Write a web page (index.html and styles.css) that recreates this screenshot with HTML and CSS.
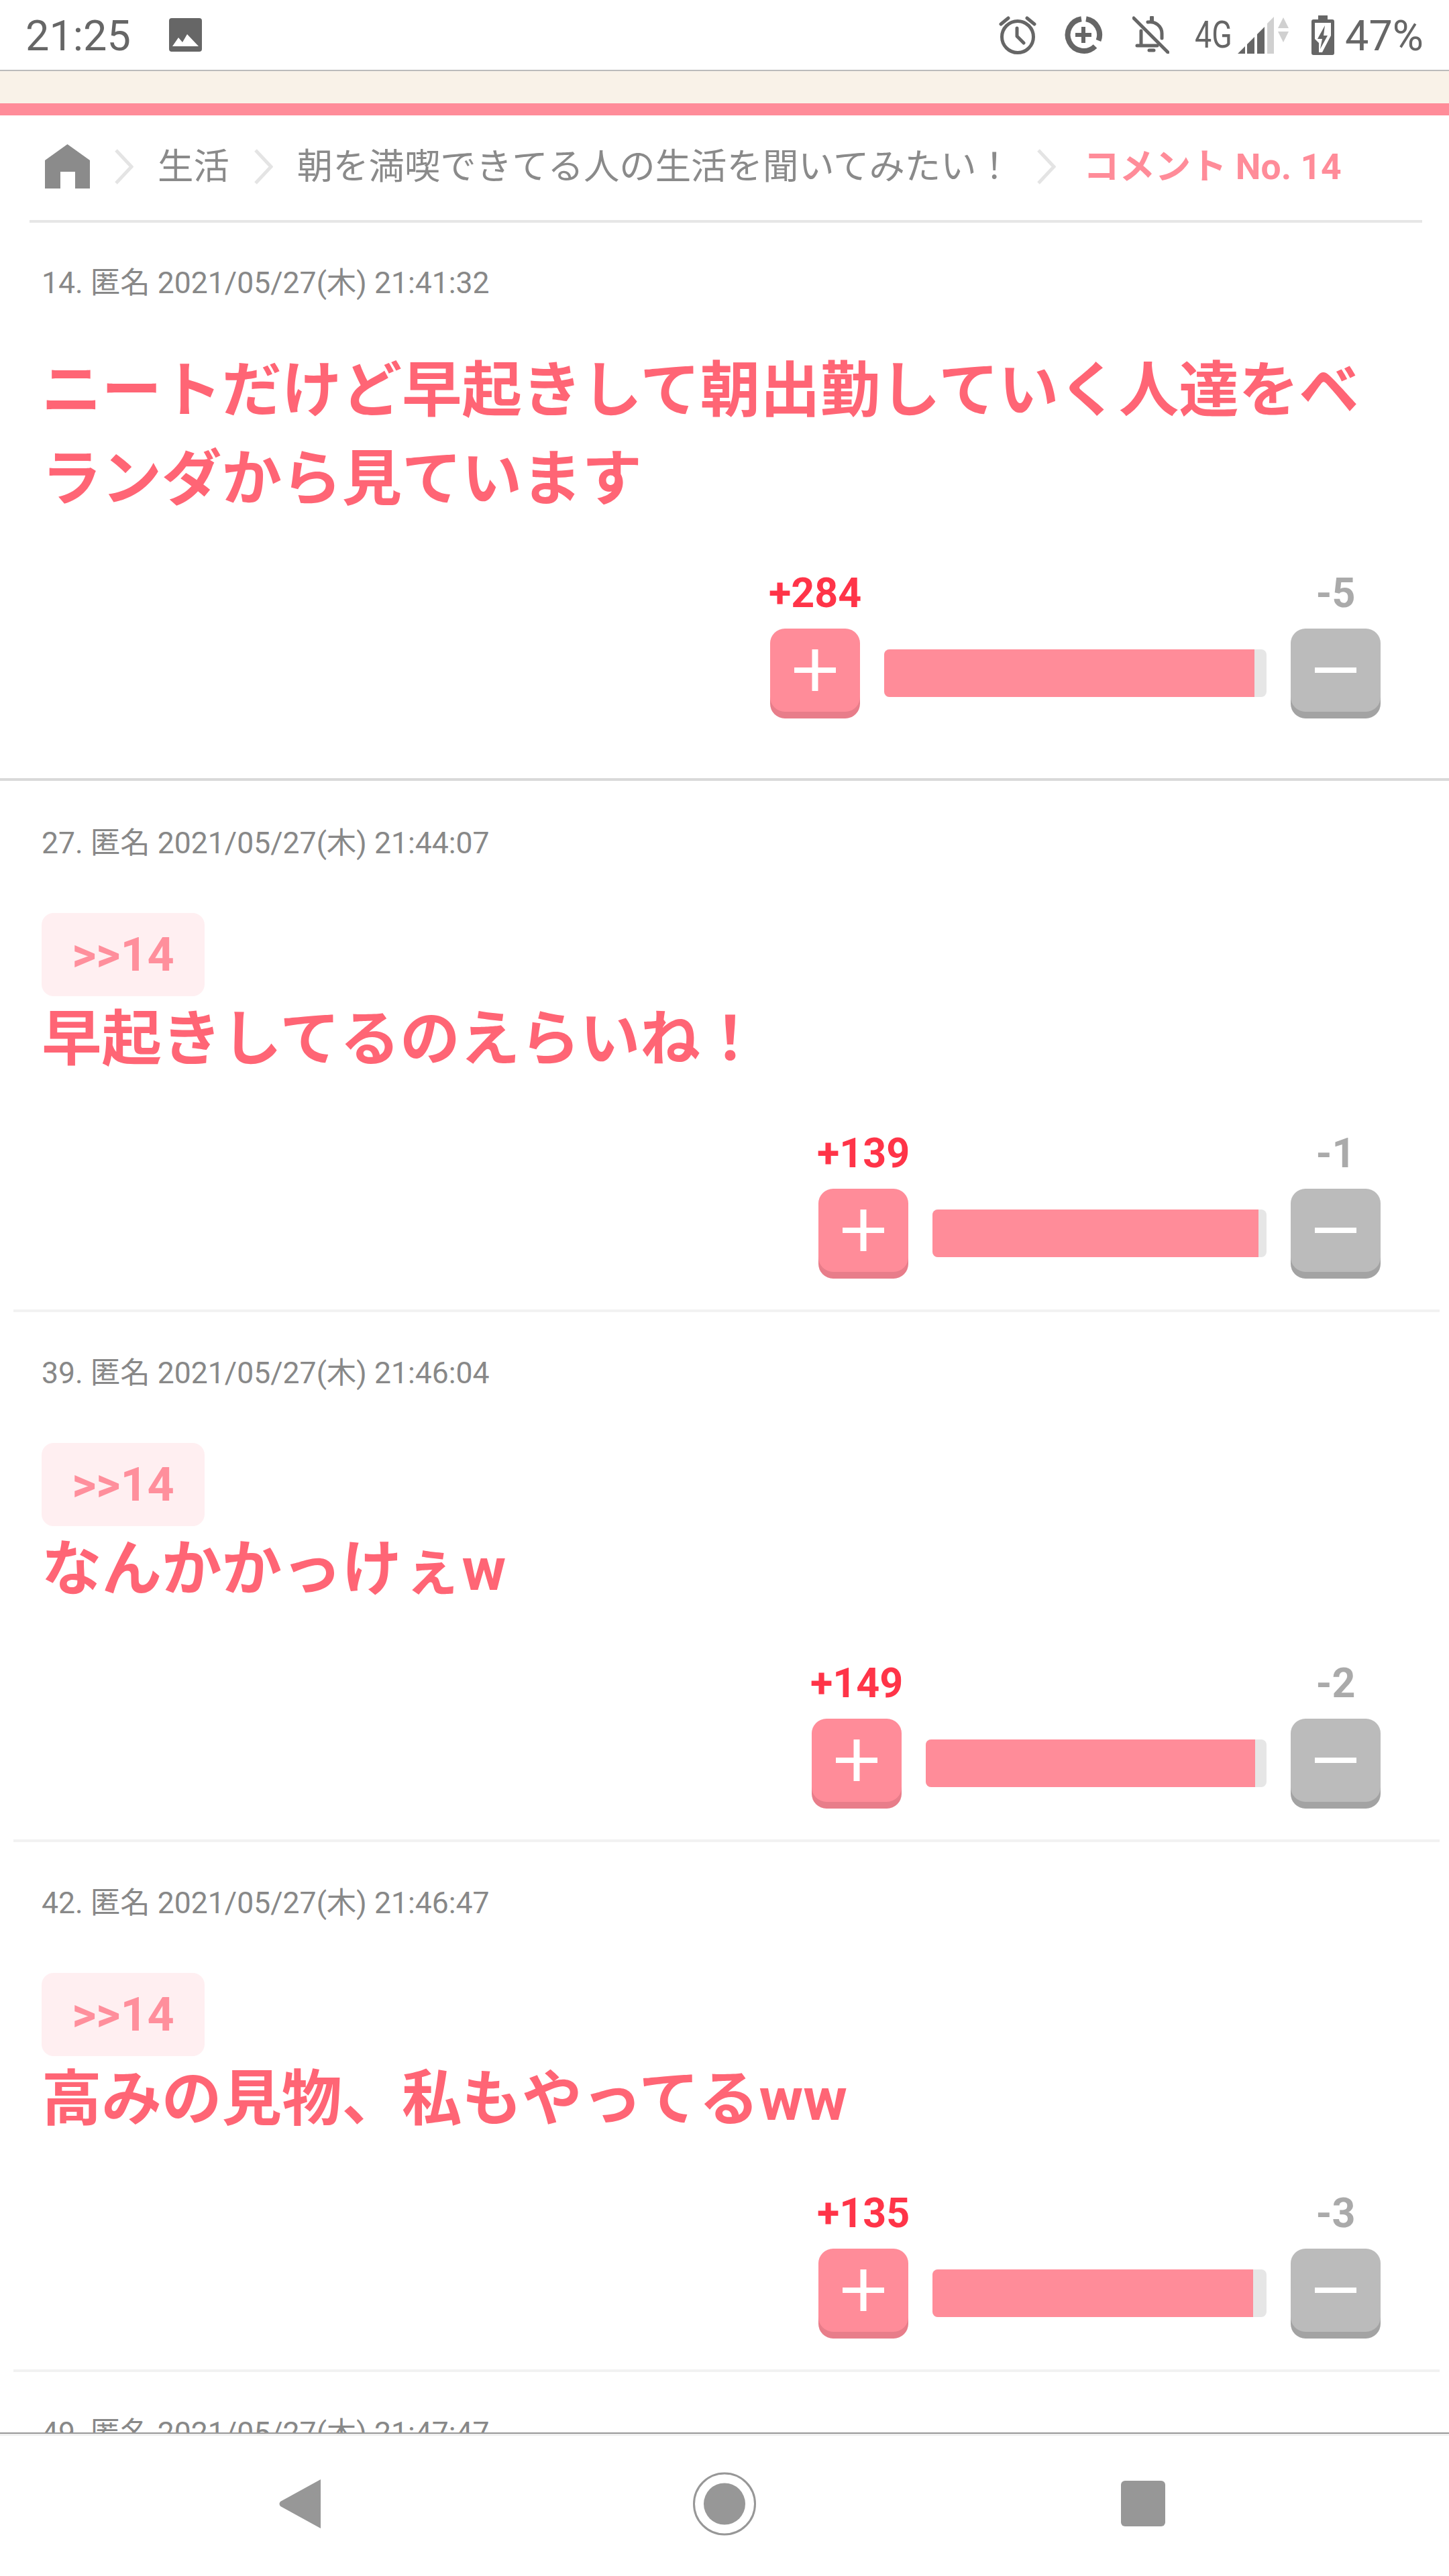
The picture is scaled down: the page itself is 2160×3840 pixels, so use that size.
FILE: index.html
```html
<!DOCTYPE html>
<html lang="ja">
  <head>
    <meta charset="UTF-8" />
    <meta name="viewport" content="width=device-width, initial-scale=1.0" />
    <title>コメント No. 14</title>
    <link rel="stylesheet" href="styles.css">
  </head>
  <body>
    <div class="screen">
      <div class="status-bar">
        <div class="status-left">
          <span class="status-text">21:25</span>
          <svg class="icon-image" width="49" height="50" viewBox="0 0 49 50">
            <rect width="49" height="50" rx="4" fill="#666"/>
            <path d="M5 42 L14 29 L20 36 L27 24 L44 42 Z" fill="#fff"/>
          </svg>
        </div>
        <div class="status-right">
          <svg class="icon-alarm" width="56" height="57" viewBox="0 0 56 57" fill="none" stroke="#666" stroke-width="5" stroke-linecap="round" stroke-linejoin="round">
            <circle cx="28" cy="31" r="23.5"/>
            <path d="M3 12 L14 3 M42 3 L53 12 M27 18 V30 L37 40"/>
          </svg>
          <svg class="icon-saver" width="57" height="57" viewBox="0 0 57 57" fill="none" stroke="#666">
            <path d="M25 4.2 A24 24 0 1 0 45.5 45" stroke-width="8"/>
            <path d="M32 4.3 A24 24 0 0 1 50.5 36.5" stroke-width="8"/>
            <path d="M16 28 H40 M28 16 V40" stroke-width="6"/>
          </svg>
          <svg class="icon-bell" width="55" height="56" viewBox="0 0 55 56" fill="none" stroke="#666" stroke-width="5" stroke-linecap="round" stroke-linejoin="round">
            <path d="M2 3 L53 54"/>
            <path d="M23 9 C34 7 44 15 44 26 V33"/>
            <path d="M13 22 V44 M7 44 H37"/>
            <path d="M29 2 V7" stroke-width="6"/>
            <path d="M25 51 H32" stroke-width="5"/>
          </svg>
          <span class="status-net">4G</span>
          <svg class="icon-signal" width="76" height="55" viewBox="0 0 76 55">
            <path d="M0 55 H11 V44 Z M14 55 H25 V30 L14 41 Z M29 55 H40 V15 L29 26 Z" fill="#666"/>
            <path d="M44 55 H54 V0 L44 10 Z M68 1 L76 17 H60 Z M60 22 H76 L68 38 Z" fill="#d0d0d0"/>
          </svg>
          <svg class="icon-battery" width="34" height="59" viewBox="0 0 34 59">
            <path d="M10 0 H24 V6 H31 Q34 6 34 9 V56 Q34 59 31 59 H3 Q0 59 0 56 V9 Q0 6 3 6 H10 Z" fill="#666"/>
            <path d="M5 11 H29 V30 L16 55 H11 V41 L5 35 Z" fill="#fff"/>
            <path d="M20 15 L9 35 H16 L13 50 L24 30 H18 Z" fill="#666"/>
          </svg>
          <span class="status-text status-battery">47%</span>
        </div>
      </div>

      <div class="notice-bar"></div>

      <div class="page">
        <nav class="crumbs">
          <svg class="crumb-home" width="67" height="66" viewBox="0 0 67 66">
            <path d="M33.5 0 L67 24 V66 H45 V41 H23 V66 H0 V24 Z" fill="#8b8b8b"/>
          </svg>
          <svg class="crumb-arrow" width="29" height="53" viewBox="0 0 29 53"><path d="M3 2 L26 26.500 L3 51" fill="none" stroke="#e4e4e4" stroke-width="5"/></svg>
          <a class="crumb-link">生活</a>
          <svg class="crumb-arrow" width="29" height="53" viewBox="0 0 29 53"><path d="M3 2 L26 26.500 L3 51" fill="none" stroke="#e4e4e4" stroke-width="5"/></svg>
          <a class="crumb-link">朝を満喫できてる人の生活を聞いてみたい！</a>
          <svg class="crumb-arrow" width="29" height="53" viewBox="0 0 29 53"><path d="M3 2 L26 26.500 L3 51" fill="none" stroke="#e4e4e4" stroke-width="5"/></svg>
          <strong class="crumb-current">コメント No. 14</strong>
        </nav>

        <article class="comment comment-main">
          <div class="comment-meta">14. 匿名 2021/05/27(木) 21:41:32</div>
          <p class="comment-text">ニートだけど早起きして朝出勤していく人達をベランダから見ています</p>
          <div class="vote">
            <div class="vote-col">
              <span class="count count-plus">+284</span>
              <button class="vote-btn vote-plus" type="button">
                <svg width="62" height="62" viewBox="0 0 62 62"><path d="M26.500 0 H35.500 V27 H62 V35 H35.500 V62 H26.500 V35 H0 V27 H26.500 Z" fill="#fff"/></svg>
              </button>
            </div>
            <div class="bar" style="width: 570px"><div class="bar-fill" style="width: 96.8%"></div></div>
            <div class="vote-col">
              <span class="count count-minus">-5</span>
              <button class="vote-btn vote-minus" type="button">
                <svg width="62" height="62" viewBox="0 0 62 62"><path d="M0 27 H62 V35 H0 Z" fill="#fff"/></svg>
              </button>
            </div>
          </div>
        </article>

        <article class="comment">
          <div class="comment-meta">27. 匿名 2021/05/27(木) 21:44:07</div>
          <a class="reply-chip">&gt;&gt;14</a>
          <p class="comment-text">早起きしてるのえらいね！</p>
          <div class="vote">
            <div class="vote-col">
              <span class="count count-plus">+139</span>
              <button class="vote-btn vote-plus" type="button">
                <svg width="62" height="62" viewBox="0 0 62 62"><path d="M26.500 0 H35.500 V27 H62 V35 H35.500 V62 H26.500 V35 H0 V27 H26.500 Z" fill="#fff"/></svg>
              </button>
            </div>
            <div class="bar" style="width: 498px"><div class="bar-fill" style="width: 97.6%"></div></div>
            <div class="vote-col">
              <span class="count count-minus">-1</span>
              <button class="vote-btn vote-minus" type="button">
                <svg width="62" height="62" viewBox="0 0 62 62"><path d="M0 27 H62 V35 H0 Z" fill="#fff"/></svg>
              </button>
            </div>
          </div>
        </article>

        <article class="comment">
          <div class="comment-meta">39. 匿名 2021/05/27(木) 21:46:04</div>
          <a class="reply-chip">&gt;&gt;14</a>
          <p class="comment-text">なんかかっけぇw</p>
          <div class="vote">
            <div class="vote-col">
              <span class="count count-plus">+149</span>
              <button class="vote-btn vote-plus" type="button">
                <svg width="62" height="62" viewBox="0 0 62 62"><path d="M26.500 0 H35.500 V27 H62 V35 H35.500 V62 H26.500 V35 H0 V27 H26.500 Z" fill="#fff"/></svg>
              </button>
            </div>
            <div class="bar" style="width: 508px"><div class="bar-fill" style="width: 96.7%"></div></div>
            <div class="vote-col">
              <span class="count count-minus">-2</span>
              <button class="vote-btn vote-minus" type="button">
                <svg width="62" height="62" viewBox="0 0 62 62"><path d="M0 27 H62 V35 H0 Z" fill="#fff"/></svg>
              </button>
            </div>
          </div>
        </article>

        <article class="comment">
          <div class="comment-meta">42. 匿名 2021/05/27(木) 21:46:47</div>
          <a class="reply-chip">&gt;&gt;14</a>
          <p class="comment-text">高みの見物、私もやってるww</p>
          <div class="vote">
            <div class="vote-col">
              <span class="count count-plus">+135</span>
              <button class="vote-btn vote-plus" type="button">
                <svg width="62" height="62" viewBox="0 0 62 62"><path d="M26.500 0 H35.500 V27 H62 V35 H35.500 V62 H26.500 V35 H0 V27 H26.500 Z" fill="#fff"/></svg>
              </button>
            </div>
            <div class="bar" style="width: 498px"><div class="bar-fill" style="width: 96%"></div></div>
            <div class="vote-col">
              <span class="count count-minus">-3</span>
              <button class="vote-btn vote-minus" type="button">
                <svg width="62" height="62" viewBox="0 0 62 62"><path d="M0 27 H62 V35 H0 Z" fill="#fff"/></svg>
              </button>
            </div>
          </div>
        </article>

        <article class="comment">
          <div class="comment-meta">49. 匿名 2021/05/27(木) 21:47:47</div>
        </article>
      </div>

      <div class="nav-bar">
        <svg class="nav-back" width="62" height="73" viewBox="0 0 62 73"><path d="M62 0 V73 L2 40 Q-1 36.500 2 33 Z" fill="#979797"/></svg>
        <svg class="nav-home" width="94" height="97" viewBox="0 0 94 97">
          <circle cx="47" cy="48.500" r="45.500" fill="none" stroke="#979797" stroke-width="3"/>
          <circle cx="47" cy="48.500" r="31" fill="#979797"/>
        </svg>
        <div class="nav-recent"></div>
      </div>
    </div>
  </body>
</html>
```

FILE: styles.css
```css
* {
  box-sizing: border-box;
}
html,
body {
  margin: 0;
  padding: 0;
  background-color: #fff;
}
body {
  font-family: Roboto, "Noto Sans CJK JP", sans-serif;
}
.screen {
  display: flex;
  flex-direction: column;
  width: 2160px;
  height: 3840px;
  overflow: hidden;
}

/* status bar */
.status-bar {
  display: flex;
  justify-content: space-between;
  align-items: center;
  height: 106px;
  padding: 0 38px;
  border-bottom: 2px solid #bbb;
  flex-shrink: 0;
}
.status-left,
.status-right {
  display: flex;
  align-items: center;
}
.status-text {
  margin-top: 4px;
  font-size: 63px;
  line-height: 100px;
  color: #666;
}
.icon-image {
  margin-left: 57px;
}
.icon-saver {
  margin-left: 42px;
}
.icon-bell {
  margin-left: 44px;
}
.status-net {
  width: 55px;
  margin-left: 38px;
  font-size: 56px;
  color: #666;
  white-space: nowrap;
  transform: scaleX(0.8);
  transform-origin: left center;
}
.icon-signal {
  margin-left: 9px;
}
.icon-battery {
  margin-left: 34px;
}
.status-battery {
  margin-left: 16px;
}

.notice-bar {
  height: 66px;
  background: #f9f2e8;
  border-bottom: 18px solid #ff8c99;
  flex-shrink: 0;
}

/* breadcrumb */
.page {
  flex: 1;
  min-height: 0;
  overflow: hidden;
}
.crumbs {
  display: flex;
  align-items: center;
  height: 160px;
  margin: 0 40px 0 44px;
  padding: 0 0 4px 23px;
  border-bottom: 4px solid #e6e6e6;
  white-space: nowrap;
}
.crumb-arrow {
  margin: 0 36px;
}
.crumb-link,
.crumb-current {
  margin-bottom: 10px;
  font-size: 53.4px;
}
.crumb-link {
  color: #8a8a8a;
}
.crumb-current {
  margin-left: 5px;
  font-weight: bold;
  color: #ff8c99;
}

/* comments */
.comment {
  margin: 0 14px 0 20px;
  padding: 61px 42px 46px;
  border-bottom: 4px solid #f2f2f2;
}
.comment-main {
  margin: 0;
  padding: 60px 62px 89px;
  border-bottom-color: #d9d9d9;
}
.comment-main + .comment {
  padding-top: 63px;
}
.comment-meta {
  font-size: 44.5px;
  line-height: 60px;
  color: #888;
}
.comment-text {
  margin: 3px 0 -3px;
  font-size: 89.5px;
  font-weight: bold;
  line-height: 132px;
  color: #ff6575;
}
.comment-main .comment-text {
  margin-top: 65px;
}
.reply-chip {
  display: flex;
  align-items: center;
  justify-content: center;
  width: 243px;
  height: 124px;
  margin: 74px 0 -4px;
  background: #ffeff1;
  border-radius: 18px;
  font-size: 70px;
  font-weight: bold;
  color: #ff8f9c;
}

/* vote */
.vote {
  display: flex;
  justify-content: flex-end;
  align-items: flex-end;
  gap: 36px;
  margin-top: 76px;
  padding-right: 46px;
}
.comment-main .vote {
  padding-right: 40px;
}
.vote-col {
  display: flex;
  flex-direction: column;
  align-items: center;
  width: 134px;
  white-space: nowrap;
}
.count {
  margin-bottom: 23px;
  font-size: 61px;
  font-weight: bold;
  line-height: 60px;
}
.count-plus {
  color: #ff3448;
}
.count-minus {
  color: #aaa;
}
.vote-btn {
  display: flex;
  align-items: center;
  justify-content: center;
  width: 134px;
  height: 124px;
  margin-bottom: 10px;
  padding: 0;
  border: 0;
  border-radius: 22px;
}
.vote-plus {
  background: #ff8c99;
  box-shadow: 0 10px 0 #e87d8a;
}
.vote-minus {
  background: #bbb;
  box-shadow: 0 10px 0 #a3a3a3;
}
.bar {
  height: 71px;
  margin-bottom: 32px;
  background: #e6e6e6;
  border-radius: 8px;
  overflow: hidden;
}
.bar-fill {
  height: 100%;
  background: #ff8c99;
}

/* android nav */
.nav-bar {
  display: flex;
  align-items: center;
  height: 214px;
  padding: 0 0 4px 416px;
  background: #fff;
  border-top: 2px solid #999;
  box-shadow: inset 0 3px 0 #f0f0f0;
  flex-shrink: 0;
}
.nav-home {
  margin-left: 555px;
}
.nav-recent {
  width: 66px;
  height: 68px;
  margin-left: 544px;
  background: #979797;
  border-radius: 6px;
}
```
